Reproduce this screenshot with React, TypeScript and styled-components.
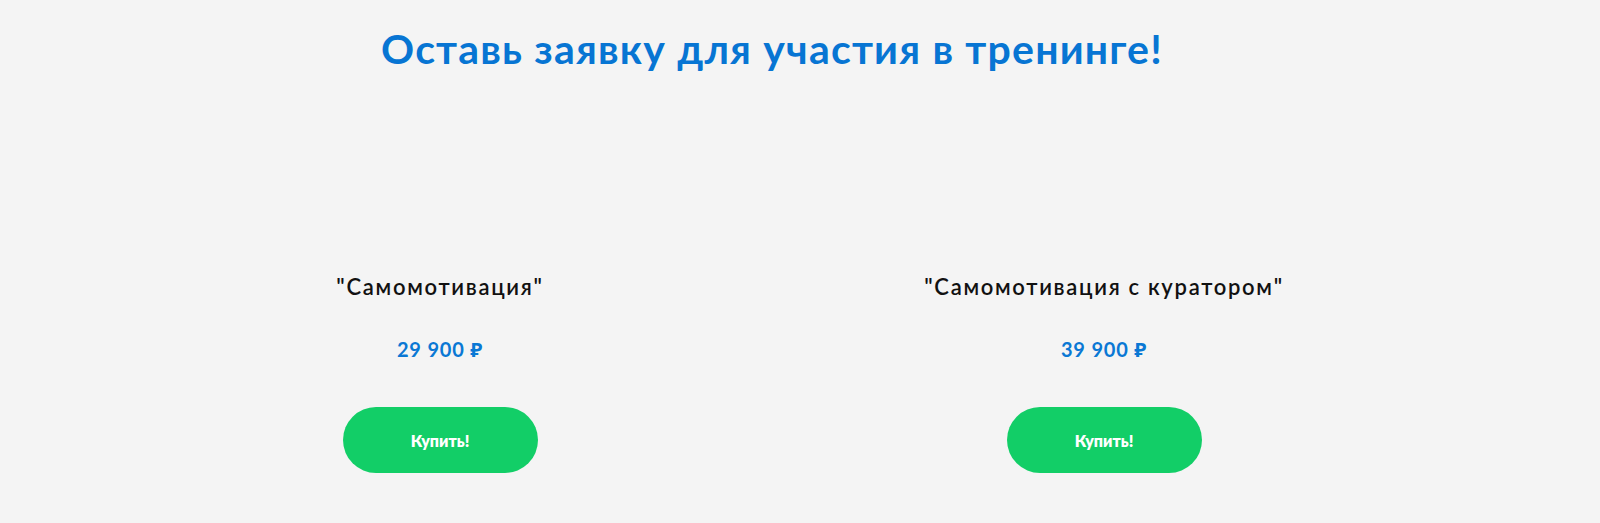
import React from 'react';
import styled, { createGlobalStyle } from 'styled-components';

const GlobalStyle = createGlobalStyle`
  html, body {
    margin: 0;
    padding: 0;
    background: #f4f4f4;
  }
  body {
    font-family: 'Lato', 'Noto Sans', sans-serif;
  }
`;

const Page = styled.div`
  min-height: 523px;
  background: #f4f4f4;
`;

const Section = styled.section`
  width: 1328px;
  margin-left: 108px;
  padding-top: 23px;
`;

const Heading = styled.h1`
  margin: 0;
  text-align: center;
  font-size: 41px;
  line-height: 52px;
  letter-spacing: 1.2px;
  font-weight: 700;
  color: #0775d3;
`;

const Plans = styled.div`
  display: grid;
  grid-template-columns: 1fr 1fr;
  margin-top: 198px;
`;

const Plan = styled.div`
  display: flex;
  flex-direction: column;
  align-items: center;
`;

const PlanName = styled.div`
  font-size: 22px;
  line-height: 28px;
  letter-spacing: 1.7px;
  font-weight: 600;
  color: #111;
`;

const Price = styled.div`
  margin-top: 36px;
  font-size: 20px;
  line-height: 24px;
  letter-spacing: 0.8px;
  font-weight: 700;
  color: #0a78d4;
`;

const BuyButton = styled.button`
  margin-top: 46px;
  width: 195px;
  height: 66px;
  border: none;
  border-radius: 33px;
  background: #12ce67;
  color: #fff;
  font-family: inherit;
  font-size: 16px;
  font-weight: 800;
  cursor: pointer;
`;

const plans = [
  { name: '"Самомотивация"', price: '29 900 ₽' },
  { name: '"Самомотивация с куратором"', price: '39 900 ₽' },
];

export default function App() {
  return (
    <Page>
      <GlobalStyle />
      <Section>
        <Heading>Оставь заявку для участия в тренинге!</Heading>
        <Plans>
          {plans.map((p) => (
            <Plan key={p.name}>
              <PlanName>{p.name}</PlanName>
              <Price>{p.price}</Price>
              <BuyButton>Купить!</BuyButton>
            </Plan>
          ))}
        </Plans>
      </Section>
    </Page>
  );
}
